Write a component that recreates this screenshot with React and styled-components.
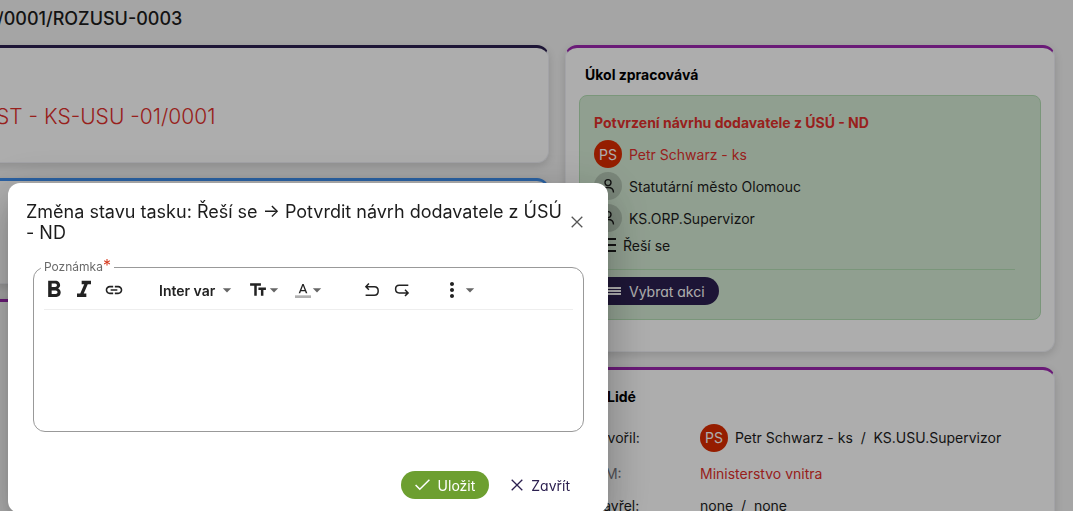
import React from "react";
import styled, { createGlobalStyle } from "styled-components";
import {
  MdFormatBold,
  MdFormatItalic,
  MdLink,
  MdTextFields,
  MdMoreVert,
  MdArrowDropDown,
} from "react-icons/md";

const GlobalStyle = createGlobalStyle`
  * {
    box-sizing: border-box;
  }
  body {
    margin: 0;
    background-color: #f3f3f3;
    color: #1c1c1c;
    font-family: Inter, "Liberation Sans", sans-serif;
    font-size: 14px;
  }
  button, input, textarea, select {
    font-family: inherit;
  }
`;

const Page = styled.div`
  height: 100vh;
  overflow: hidden;
`;
const PageTitle = styled.h1`
  margin: 0 0 0 -3px;
  padding: 8px 0 15px;
  font-size: 18px;
  line-height: 22px;
  font-weight: 500;
`;
const Columns = styled.div`
  display: grid;
  grid-template-columns: minmax(0, 573fr) minmax(0, 490fr);
  gap: 16px;
  margin: 0 18px 0 -24px;
`;
const Column = styled.div`
  display: flex;
  flex-direction: column;
  gap: 15px;
`;
const Card = styled.section`
  min-height: ${(props) => props.$minHeight || 0}px;
  padding: 18px 13px 31px;
  background-color: #fff;
  border: 1px solid #f0f1f6;
  border-top: 3px solid ${(props) => props.$accent};
  border-radius: 12px;
  box-shadow: 0 3px 8px rgba(0, 0, 0, 0.14);
`;
const Subject = styled.div`
  padding: 37px 0 0 6px;
  font-size: 21px;
  line-height: 28px;
  font-weight: 300;
  color: #e0302c;
`;
const CardTitle = styled.h2`
  display: flex;
  align-items: center;
  gap: 6px;
  margin: 0 0 11px;
  padding-left: 6px;
  font-size: 14px;
  line-height: 18px;
  font-weight: 700;
  color: #000;
`;

const TaskBox = styled.div`
  padding: 18px 25px 14px 14px;
  background-color: #d5ebd5;
  border: 1px solid #b4deb4;
  border-radius: 8px;
`;
const TaskTitle = styled.h3`
  margin: 0 0 8px;
  font-size: 14px;
  line-height: 18px;
  font-weight: 700;
  color: #e0302c;
`;
const PersonRow = styled.div`
  display: flex;
  align-items: center;
  gap: 7px;
  height: 28px;
  margin-bottom: 4px;
  color: ${(props) => (props.$red ? "#e0302c" : "#1c1c1c")};
`;
const StatusRow = styled(PersonRow)`
  height: 18px;
  margin-bottom: 15px;
`;
const Avatar = styled.span`
  display: flex;
  align-items: center;
  justify-content: center;
  flex: none;
  width: 28px;
  height: 28px;
  border-radius: 50%;
  font-size: 14px;
  color: #fff;
  background-color: ${(props) => (props.$grey ? "#b4c6b4" : "#dc2c00")};
`;
const Divider = styled.hr`
  margin: 0 0 7px;
  border: 0;
  border-top: 1px solid #b4deb4;
`;

const Button = styled.button`
  display: inline-flex;
  align-items: center;
  gap: 8px;
  height: 28px;
  padding: 0 14px;
  border: 0;
  border-radius: 14px;
  font-size: 14px;
  font-weight: 400;
  font-feature-settings: "cv11";
  cursor: pointer;
  color: ${(props) => props.$color || "#fff"};
  background-color: ${(props) => props.$background || "transparent"};
`;

const PeopleList = styled.dl`
  display: grid;
  grid-template-columns: 115px 1fr;
  align-items: center;
  row-gap: 12px;
  margin: 0;
  padding: 7px 6px 0;
`;
const Term = styled.dt`
  line-height: 20px;
  color: ${(props) => (props.$muted ? "#77777f" : "#1c1c1c")};
`;
const Value = styled.dd`
  display: flex;
  align-items: center;
  gap: 7px;
  margin: 0;
  line-height: 20px;
  white-space: pre;
  color: ${(props) => (props.$red ? "#e0302c" : "#1c1c1c")};
`;

const Overlay = styled.div`
  position: fixed;
  inset: 0;
  overflow: hidden;
  background-color: rgba(0, 0, 0, 0.32);
`;
const Dialog = styled.div`
  position: absolute;
  left: 8px;
  top: 183px;
  width: 600px;
  padding: 18px 24px 14px 18px;
  background-color: #fff;
  border-radius: 12px;
  box-shadow: 0 11px 15px -7px rgba(0, 0, 0, 0.2),
    0 24px 38px 3px rgba(0, 0, 0, 0.14), 0 9px 46px 8px rgba(0, 0, 0, 0.12);
`;
const DialogHeader = styled.div`
  display: flex;
  align-items: center;
  justify-content: space-between;
`;
const DialogTitle = styled.h2`
  flex: 1;
  margin: 0;
  font-size: 18px;
  line-height: 21px;
  font-weight: 400;
`;
const IconButton = styled.button`
  display: flex;
  align-items: center;
  justify-content: center;
  flex: none;
  width: ${(props) => (props.$width ? `${props.$width}px` : "auto")};
  height: 24px;
  margin: 0;
  padding: 0;
  border: 0;
  background: none;
  color: #222;
  cursor: pointer;
`;
const Editor = styled.fieldset`
  min-width: 0;
  margin: 16px 0 0 7px;
  padding: 0 10px 10px;
  border: 1px solid #999;
  border-radius: 12px;
`;
const Legend = styled.legend`
  margin-left: -3px;
  padding: 0 3px;
  font-size: 12px;
  line-height: 16px;
  color: #6a6a6a;
`;
const Required = styled.span`
  font-size: 16px;
  line-height: 12px;
  color: #d63a1e;
`;
const Toolbar = styled.div`
  display: flex;
  align-items: center;
  height: 35px;
  padding-bottom: 4px;
  border-bottom: 1px solid #eee;
`;
const Group = styled.div`
  display: flex;
  align-items: center;
  gap: ${(props) => props.$gap || 0}px;
  margin-right: ${(props) => props.$after || 0}px;
`;
const MarkGroup = styled(Group)`
  margin-left: -4px;
`;
const FontName = styled.span`
  margin-right: 6px;
  font-size: 14px;
  font-weight: 600;
`;
const Caret = styled(MdArrowDropDown)`
  margin-left: -4px;
  color: #666;
`;
const TextArea = styled.textarea`
  display: block;
  width: 100%;
  height: 111px;
  padding: 8px 0;
  border: 0;
  outline: 0;
  resize: none;
  background: transparent;
  font-size: 14px;
`;
const Actions = styled.div`
  display: flex;
  justify-content: flex-end;
  gap: 8px;
  padding-top: 39px;
`;

function PersonIcon() {
  return (
    <svg width="16" height="16" viewBox="0 0 16 16" fill="none" stroke="#1c1c1c" strokeWidth="1.4">
      <circle cx="8" cy="4.6" r="3" />
      <path d="M2.5 14.5c0-3.2 2.2-5 5.5-5s5.5 1.8 5.5 5" />
    </svg>
  );
}

function CrossIcon({ size, color }) {
  return (
    <svg width={size} height={size} viewBox="0 0 12 12" fill="none" stroke={color} strokeWidth="1.3">
      <path d="M.7.7l10.6 10.6M11.3.7L.7 11.3" />
    </svg>
  );
}

function CheckIcon() {
  return (
    <svg width="15" height="12" viewBox="0 0 15 12" fill="none" stroke="#fff" strokeWidth="1.5">
      <path d="M.6 6l4.2 4.3L14.4.8" />
    </svg>
  );
}

function BarsIcon({ color, width, height, line }) {
  const middle = (height - line) / 2;
  return (
    <svg width={width} height={height} fill={color}>
      <rect width={width} height={line} />
      <rect y={middle} width={width} height={line} />
      <rect y={height - line} width={width} height={line} />
    </svg>
  );
}

function UndoIcon() {
  return (
    <svg width="16" height="16" viewBox="0 0 16 16" fill="none" stroke="#222" strokeWidth="1.5">
      <path d="M4.9 1.6L1.9 4.7l3 3M2 4.7h8.3c2.4 0 3.9 1.8 3.9 4.3s-1.5 4.2-3.9 4.2H1.6" />
    </svg>
  );
}

function RedoIcon() {
  return (
    <svg width="16" height="16" viewBox="0 0 16 16" fill="none" stroke="#222" strokeWidth="1.5">
      <path d="M14.3 3.2H5.2C2.9 3.2 1.6 4.7 1.6 7s1.3 3.9 3.6 3.9h8.6M11 7.8l3.1 3.1-3.1 3.1" />
    </svg>
  );
}

function FontColorIcon() {
  return (
    <svg width="16" height="16" viewBox="0 0 24 24">
      <path fill="#222" d="M11 3L5.5 17h2.25l1.12-3h6.25l1.12 3h2.25L13 3h-2zm-1.38 9L12 5.67 14.38 12H9.62z" />
      <path fill="#b0b0b0" d="M0 20h24v4H0z" />
    </svg>
  );
}

function TaskCard() {
  return (
    <Card $accent="#9c27b0">
      <CardTitle>Úkol zpracovává</CardTitle>
      <TaskBox>
        <TaskTitle>Potvrzení návrhu dodavatele z ÚSÚ - ND</TaskTitle>
        <PersonRow $red>
          <Avatar>PS</Avatar>
          Petr Schwarz - ks
        </PersonRow>
        <PersonRow>
          <Avatar $grey>
            <PersonIcon />
          </Avatar>
          Statutární město Olomouc
        </PersonRow>
        <PersonRow>
          <Avatar $grey>
            <PersonIcon />
          </Avatar>
          KS.ORP.Supervizor
        </PersonRow>
        <StatusRow>
          <BarsIcon color="#1c1c1c" width={22} height={14} line={2} />
          Řeší se
        </StatusRow>
        <Divider />
        <Button $background="#2c2050">
          <BarsIcon color="#fff" width={13} height={8} line={2} />
          Vybrat akci
        </Button>
      </TaskBox>
    </Card>
  );
}

function PeopleCard() {
  return (
    <Card $accent="#9c27b0">
      <CardTitle>
        <PersonIcon />
        Lidé
      </CardTitle>
      <PeopleList>
        <Term>Vytvořil:</Term>
        <Value>
          <Avatar>PS</Avatar>
          {"Petr Schwarz - ks  /  KS.USU.Supervizor"}
        </Value>
        <Term $muted>OVM:</Term>
        <Value $red>Ministerstvo vnitra</Value>
        <Term>Uzavřel:</Term>
        <Value>{"none  /  none"}</Value>
      </PeopleList>
    </Card>
  );
}

function StateDialog() {
  return (
    <Dialog role="dialog" aria-labelledby="dialog-title">
      <DialogHeader>
        <DialogTitle id="dialog-title">
          Změna stavu tasku: Řeší se → Potvrdit návrh dodavatele z ÚSÚ - ND
        </DialogTitle>
        <IconButton aria-label="Zavřít dialog" $width={14}>
          <CrossIcon size={12} color="#555" />
        </IconButton>
      </DialogHeader>
      <Editor>
        <Legend>
          <label htmlFor="note">Poznámka</label>
          <Required>*</Required>
        </Legend>
        <Toolbar>
          <MarkGroup $gap={2} $after={31}>
            <IconButton aria-label="Tučné" $width={28}>
              <MdFormatBold size={28} />
            </IconButton>
            <IconButton aria-label="Kurzíva" $width={28}>
              <MdFormatItalic size={28} />
            </IconButton>
            <IconButton aria-label="Odkaz" $width={28}>
              <MdLink size={20} />
            </IconButton>
          </MarkGroup>
          <Group $gap={11} $after={37}>
            <IconButton aria-label="Písmo">
              <FontName>Inter var</FontName>
              <Caret size={20} />
            </IconButton>
            <IconButton aria-label="Velikost písma">
              <MdTextFields size={20} />
              <Caret size={20} />
            </IconButton>
            <IconButton aria-label="Barva písma">
              <FontColorIcon />
              <Caret size={20} />
            </IconButton>
          </Group>
          <Group $gap={14} $after={30}>
            <IconButton aria-label="Zpět">
              <UndoIcon />
            </IconButton>
            <IconButton aria-label="Znovu">
              <RedoIcon />
            </IconButton>
          </Group>
          <IconButton aria-label="Další">
            <MdMoreVert size={24} />
            <Caret size={20} />
          </IconButton>
        </Toolbar>
        <TextArea id="note" required />
      </Editor>
      <Actions>
        <Button $background="#6d9f30">
          <CheckIcon />
          Uložit
        </Button>
        <Button $color="#2c2050">
          <CrossIcon size={12} color="#2c2050" />
          Zavřít
        </Button>
      </Actions>
    </Dialog>
  );
}

function App() {
  return (
    <>
      <GlobalStyle />
      <Page>
        <PageTitle>/0001/ROZUSU-0003</PageTitle>
        <Columns>
          <Column>
            <Card $accent="#2c2050" $minHeight={118}>
              <Subject>ST - KS-USU -01/0001</Subject>
            </Card>
            <Card $accent="#3f8fee" $minHeight={106} />
            <Card $accent="#9c27b0" $minHeight={240} />
          </Column>
          <Column>
            <TaskCard />
            <PeopleCard />
          </Column>
        </Columns>
      </Page>
      <Overlay>
        <StateDialog />
      </Overlay>
    </>
  );
}

export default App;
